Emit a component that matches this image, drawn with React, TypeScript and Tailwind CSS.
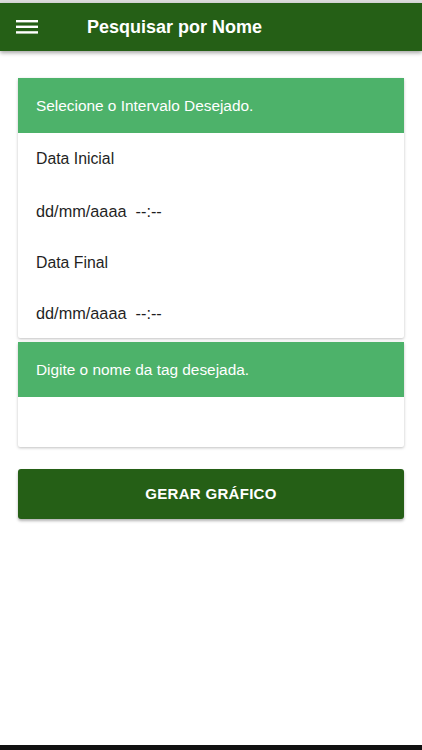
const font = { fontFamily: '"Liberation Sans", Arial, sans-serif' }

function SectionHeader({ title }: { title: string }) {
  return (
    <div className="h-[55px] bg-[#4db26a] flex items-center pl-[18px] text-[15.4px] text-white">
      {title}
    </div>
  )
}

function Row({ text, tall = true, date = false }: { text: string; tall?: boolean; date?: boolean }) {
  return (
    <div
      className={`${tall ? "h-[52px]" : "h-[49px]"} ${date ? "text-[16.3px]" : "text-[15.8px]"} flex items-center pl-[18px] text-[#1f1f1f] whitespace-pre`}
    >
      {text}
    </div>
  )
}

export default function App() {
  return (
    <div className="w-[422px] h-[750px] bg-white flex flex-col overflow-hidden" style={font}>
      <div className="h-[3px] bg-[#dcdcdc]" />
      <header className="h-[48px] bg-[#255f16] flex items-center shadow-[0_2px_4px_rgba(0,0,0,0.35)] relative z-10">
        <svg className="ml-[16px]" width="22" height="14" viewBox="0 0 22 14">
          <rect x="0" y="0" width="22" height="2.4" fill="white" />
          <rect x="0" y="5.6" width="22" height="2.4" fill="white" />
          <rect x="0" y="11.2" width="22" height="2.4" fill="white" />
        </svg>
        <h1 className="ml-[49px] text-[18px] font-bold text-white">Pesquisar por Nome</h1>
      </header>

      <main className="px-[18px] pt-[27px] flex flex-col">
        {/* Intervalo */}
        <section className="bg-white shadow-[0_1px_3px_rgba(0,0,0,0.25)] rounded-[2px]">
          <SectionHeader title="Selecione o Intervalo Desejado." />
          <Row text="Data Inicial" />
          <Row text="dd/mm/aaaa  --:--" date />
          <Row text="Data Final" />
          <Row text="dd/mm/aaaa  --:--" date tall={false} />
        </section>

        {/* Tag */}
        <section className="mt-[4px] bg-white shadow-[0_1px_3px_rgba(0,0,0,0.25)] rounded-[2px]">
          <SectionHeader title="Digite o nome da tag desejada." />
          <div className="h-[50px]" />
        </section>

        <button className="mt-[22px] h-[50px] rounded-[3px] bg-[#255f16] text-white text-[15px] font-bold tracking-[0.3px] shadow-[0_2px_3px_rgba(0,0,0,0.3)]">
          GERAR GRÁFICO
        </button>
      </main>

      <div className="mt-auto h-[5px] bg-[#111]" />
    </div>
  )
}
